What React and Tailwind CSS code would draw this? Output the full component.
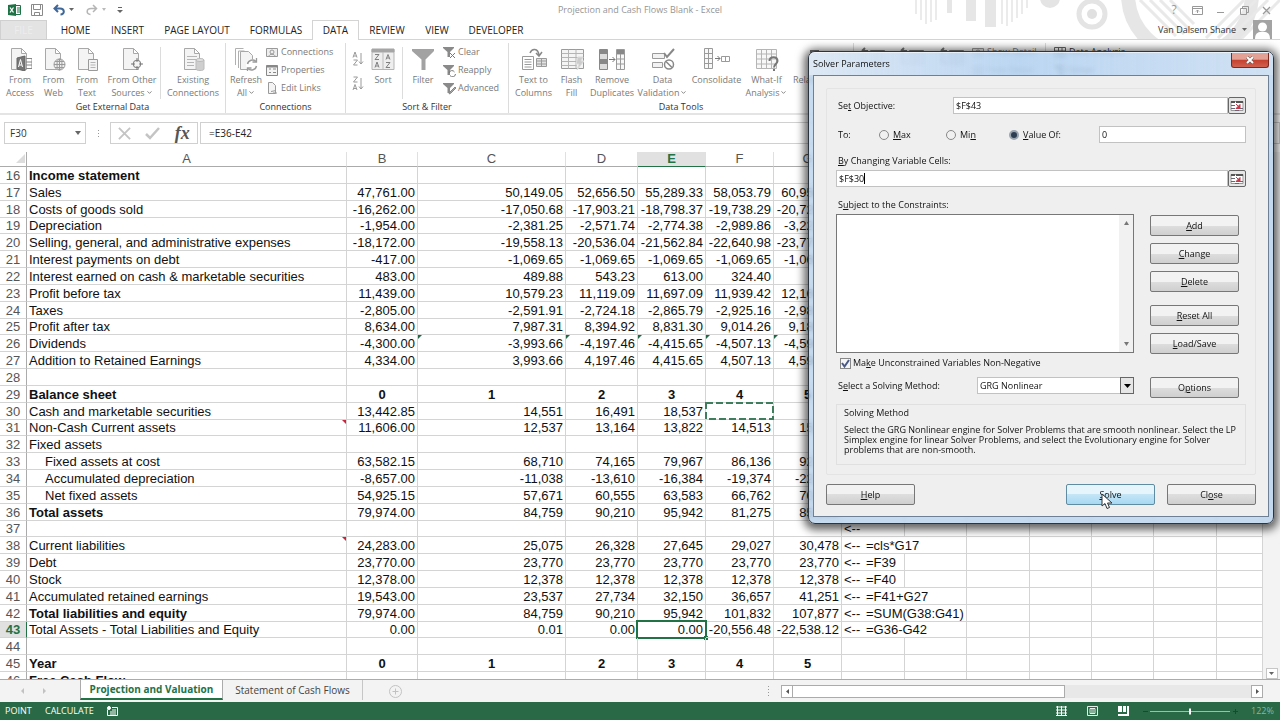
import { ChevronDown } from 'lucide-react';

const tabs = [
    { label: 'HOME', width: 'w-[51px]' },
    { label: 'INSERT', width: 'w-[53px]' },
    { label: 'PAGE LAYOUT', width: 'w-[86px]' },
    { label: 'FORMULAS', width: 'w-[72px]' },
    { label: 'DATA', width: 'w-[47px]', active: true },
    { label: 'REVIEW', width: 'w-[56px]' },
    { label: 'VIEW', width: 'w-[44px]' },
    { label: 'DEVELOPER', width: 'w-[74px]' },
];

const columns = [
    { name: 'A', width: 'w-[320px]' },
    { name: 'B', width: 'w-[71px]' },
    { name: 'C', width: 'w-[148px]' },
    { name: 'D', width: 'w-[72px]' },
    { name: 'E', width: 'w-[68px]' },
    { name: 'F', width: 'w-[68px]' },
    { name: 'G', width: 'w-[68px]' },
    { name: 'H', width: 'w-[63px]' },
    { name: 'I', width: 'w-[62px]' },
    { name: 'J', width: 'w-[63px]' },
    { name: 'K', width: 'w-[62px]' },
    { name: 'L', width: 'w-[62px]' },
    { name: 'M', width: 'w-[63px]' },
    { name: 'N', width: 'w-auto' },
];

const rows = [
    { n: 16, label: 'Income statement', bold: true },
    { n: 17, label: 'Sales', values: ['47,761.00', '50,149.05', '52,656.50', '55,289.33', '58,053.79', '60,956.48'] },
    { n: 18, label: 'Costs of goods sold', values: ['-16,262.00', '-17,050.68', '-17,903.21', '-18,798.37', '-19,738.29', '-20,725.20'] },
    { n: 19, label: 'Depreciation', values: ['-1,954.00', '-2,381.25', '-2,571.74', '-2,774.38', '-2,989.86', '-3,221.43'] },
    { n: 20, label: 'Selling, general, and administrative expenses', values: ['-18,172.00', '-19,558.13', '-20,536.04', '-21,562.84', '-22,640.98', '-23,773.03'] },
    { n: 21, label: 'Interest payments on debt', values: ['-417.00', '-1,069.65', '-1,069.65', '-1,069.65', '-1,069.65', '-1,069.65'] },
    { n: 22, label: 'Interest earned on cash & marketable securities', values: ['483.00', '489.88', '543.23', '613.00', '324.40', '2.44'] },
    { n: 23, label: 'Profit before tax', values: ['11,439.00', '10,579.23', '11,119.09', '11,697.09', '11,939.42', '12,169.61'] },
    { n: 24, label: 'Taxes', values: ['-2,805.00', '-2,591.91', '-2,724.18', '-2,865.79', '-2,925.16', '-2,981.55'] },
    { n: 25, label: 'Profit after tax', values: ['8,634.00', '7,987.31', '8,394.92', '8,831.30', '9,014.26', '9,188.06'] },
    { n: 26, label: 'Dividends', flagged: true, values: ['-4,300.00', '-3,993.66', '-4,197.46', '-4,415.65', '-4,507.13', '-4,594.03'] },
    { n: 27, label: 'Addition to Retained Earnings', values: ['4,334.00', '3,993.66', '4,197.46', '4,415.65', '4,507.13', '4,594.03'] },
    { n: 28 },
    { n: 29, label: 'Balance sheet', bold: true, years: true, values: ['0', '1', '2', '3', '4', '5'] },
    { n: 30, label: 'Cash and marketable securities', values: ['13,442.85', '14,551', '16,491', '18,537', '', ''] },
    { n: 31, label: 'Non-Cash Current assets', note: true, values: ['11,606.00', '12,537', '13,164', '13,822', '14,513', '15,239'] },
    { n: 32, label: 'Fixed assets' },
    { n: 33, label: 'Fixed assets at cost', indent: true, values: ['63,582.15', '68,710', '74,165', '79,967', '86,136', '92,783'] },
    { n: 34, label: 'Accumulated depreciation', indent: true, values: ['-8,657.00', '-11,038', '-13,610', '-16,384', '-19,374', '-22,595'] },
    { n: 35, label: 'Net fixed assets', indent: true, values: ['54,925.15', '57,671', '60,555', '63,583', '66,762', '70,100'] },
    { n: 36, label: 'Total assets', bold: true, values: ['79,974.00', '84,759', '90,210', '95,942', '81,275', '85,339'] },
    { n: 37, formula: '' },
    { n: 38, label: 'Current liabilities', note: true, values: ['24,283.00', '25,075', '26,328', '27,645', '29,027', '30,478'], formula: '=cls*G17' },
    { n: 39, label: 'Debt', values: ['23,770.00', '23,770', '23,770', '23,770', '23,770', '23,770'], formula: '=F39' },
    { n: 40, label: 'Stock', values: ['12,378.00', '12,378', '12,378', '12,378', '12,378', '12,378'], formula: '=F40' },
    { n: 41, label: 'Accumulated retained earnings', values: ['19,543.00', '23,537', '27,734', '32,150', '36,657', '41,251'], formula: '=F41+G27' },
    { n: 42, label: 'Total liabilities and equity', bold: true, values: ['79,974.00', '84,759', '90,210', '95,942', '101,832', '107,877'], formula: '=SUM(G38:G41)' },
    { n: 43, label: 'Total Assets - Total Liabilities and Equity', values: ['0.00', '0.01', '0.00', '0.00', '-20,556.48', '-22,538.12'], formula: '=G36-G42' },
    { n: 44 },
    { n: 45, label: 'Year', bold: true, years: true, values: ['0', '1', '2', '3', '4', '5'] },
    { n: 46, label: 'Free Cash Flow', bold: true },
];

/* ---------- icons ---------- */

function Icon({ children, w = 24, h = 24 }) {
    return (
        <svg width={w} height={h} viewBox={`0 0 ${w} ${h}`} fill="none" stroke="#9a9a9a" aria-hidden="true">
            {children}
        </svg>
    );
}

const Page = () => <path d="M3.500 1.500h10l5 5v16h-15zM13.500 1.500v5h5" fill="#f4f4f4" stroke="#a8a8a8" />;

const AccessIcon = () => (
    <Icon>
        <Page />
        <path d="M9 11l8-2v15l-8-2z" fill="#777" stroke="#666" />
        <path d="M10.500 20l2-7.500 2 7.500M11.200 18h2.700" stroke="#fff" />
        <path d="M18 11.500h6v10h-6M18 15h6M18 18h6" stroke="#888" />
    </Icon>
);
const WebIcon = () => (
    <Icon>
        <Page />
        <circle cx="17.500" cy="17.500" r="5.500" fill="#eee" />
        <path d="M12 17.500h11M17.500 12v11M13 14.500h9M13 20.500h9" />
        <ellipse cx="17.500" cy="17.500" rx="2.500" ry="5.500" />
    </Icon>
);
const TextIcon = () => (
    <Icon>
        <Page />
        <path d="M13.500 12.500h9v11h-9z" fill="#f4f4f4" />
        <path d="M15.500 15.500h5M15.500 18h5M15.500 20.500h5" stroke="#b5b5b5" />
    </Icon>
);
const OtherIcon = () => (
    <Icon>
        <Page />
        <circle cx="17" cy="17" r="3.800" fill="#f4f4f4" stroke="#777" />
        <path d="M17 11v4M17 19v4M11 17h4M19 17h4" stroke="#777" />
    </Icon>
);
const ExistingIcon = () => (
    <Icon>
        <Page />
        <path d="M6 9.500h10M6 12.500h10M6 15.500h7M6 18.500h7" stroke="#b5b5b5" />
        <path d="M15 13v9c0 2 8 2 8 0v-9z" fill="#cfcfcf" stroke="#bbb" />
        <ellipse cx="19" cy="13" rx="4" ry="1.500" fill="#e2e2e2" stroke="#bbb" />
    </Icon>
);
const RefreshIcon = () => (
    <Icon>
        <path d="M1.500 18V1.500h8M4.500 21V4h6" stroke="#b0b0b0" />
        <path d="M6.500 4.500h8l4 4v14h-12z" fill="#f4f4f4" stroke="#a8a8a8" />
        <circle cx="18" cy="18" r="6" fill="#fff" stroke="none" />
        <path d="M13.500 17a5 5 0 0 1 8.500-2.500M22.500 19a5 5 0 0 1-8.500 2.500" strokeWidth="1.500" />
        <path d="M22.500 11v4h-4M13.500 25v-4h4" strokeWidth="1.300" />
    </Icon>
);
const SortIcon = () => (
    <Icon>
        <path d="M1 2.500h22v20H1z" fill="#eee" stroke="#b5b5b5" />
        <path d="M1 2h22v3H1z" fill="#a5a5a5" stroke="#a5a5a5" />
        <path d="M12 5v17" stroke="#bbb" />
        <path d="M4 7.500h4l-4 5h4M4 20.500l2-5.500 2 5.500M4.700 19h2.600M15 12.500l2-5 2 5M15.700 11h2.600M15 15.500h4l-4 5h4" stroke="#808080" />
    </Icon>
);
const SortArrow = ({ down }) => (
    <Icon w={12} h={15}>
        {down
            ? <path d="M1.500 1h4l-4 5h4M1 14l2-5.500L5 14M1.700 12.500h2.600" />
            : <path d="M1 6.500L3 1l2 5.500M1.700 5h2.600M1.500 9h4l-4 5h4" />}
        <path d="M9 2v11M7 10.500l2 2.500 2-2.500" />
    </Icon>
);
const FilterIcon = () => (
    <Icon><path d="M1 2h22v2l-8.500 8.500V23h-4V12.500L1 4z" fill="#a2a2a2" stroke="none" /></Icon>
);
const ColumnsIcon = () => (
    <Icon w={26}>
        <path d="M9 6c2-5 8-5 9 2M15 6l3 3 3-4" stroke="#888" strokeWidth="1.500" />
        <path d="M1.500 9.500h11v13h-11zM3.500 12.500h7M3.500 15h7M3.500 17.500h7M3.500 20h7" />
        <path d="M15.500 11.500h10v8h-10zM20.500 11.500v8M15.500 14h10M15.500 17h10" fill="#e2e2e2" />
    </Icon>
);
const FlashIcon = () => (
    <Icon>
        <path d="M1.500 2.500h22v19h-22z" fill="#f4f4f4" />
        <path d="M1.500 6.500h22M1.500 10.500h22M1.500 14.500h15M1.500 18.500h15M8.500 2.500v19M16 2.500v19" stroke="#b5b5b5" />
        <path d="M18 10l5 0-2 4h3l-7 9 2-6h-3z" fill="#ccc" stroke="#ddd" />
    </Icon>
);
const DuplicatesIcon = () => (
    <Icon w={26}>
        <path d="M.5 2.500h8v20h-8z" fill="#ddd" stroke="#888" />
        <path d="M1 3h7v4H1zM1 12h7v5H1z" fill="#888" stroke="none" />
        <path d="M10 12.500h6M13.500 10l2.500 2.500-2.500 2.500" stroke="#777" />
        <path d="M17.500 2.500h8v20h-8zM17.500 7h8M17.500 12h8M17.500 17h8M21.500 7v15" fill="#f8f8f8" />
        <path d="M18 3h7v4h-7z" fill="#888" stroke="none" />
    </Icon>
);
const ValidationIcon = () => (
    <Icon>
        <path d="M1.500 6.500h12v5h-12zM1.500 15.500h10v5h-10z" fill="#f2f2f2" />
        <path d="M13 6l3 4 7-8" stroke="#888" strokeWidth="2" />
        <circle cx="18" cy="17.500" r="4.500" stroke="#888" strokeWidth="1.500" />
        <path d="M15 14.500l6 6" stroke="#888" strokeWidth="1.500" />
    </Icon>
);
const ConsolidateIcon = () => (
    <Icon w={26}>
        <path d="M.5 1.500h8v20h-8zM.5 6.500h8M.5 11.500h8M.5 16.500h8M4.500 1.500v20" fill="#f8f8f8" />
        <path d="M11 11.500h5M13.500 9l2.500 2.500-2.500 2.500" stroke="#777" />
        <path d="M17.500 9.500h8v5h-8zM21.500 9.500v5" />
    </Icon>
);
const WhatIfIcon = () => (
    <Icon>
        <path d="M1.500 2.500h20v19h-20zM1.500 7h20M1.500 12h20M1.500 17h20M6.500 2.500v19M11.500 2.500v19M16.500 2.500v19" fill="#f8f8f8" stroke="#b5b5b5" />
        <path d="M14.500 14c0-5 8-5 8 0 0 3-3.500 3-3.500 6.500M19 22v2" stroke="#777" strokeWidth="2" />
    </Icon>
);
const RelationIcon = () => (
    <Icon>
        <path d="M1 3h9v8H1zM14 13h9v8h-9z" fill="#777" stroke="none" />
        <path d="M10 7h8v6M5 11v7h9" />
    </Icon>
);
const OutlineIcon = () => (
    <Icon>
        <path d="M9.500 3.500h14v14h-14zM9.500 8h14M9.500 13h14M16.500 3.500v14" fill="#eee" stroke="#888" />
        <path d="M7 4H2v12h5M1 4l3-3" stroke="#777" strokeWidth="2" />
    </Icon>
);

const Funnel = ({ children }) => (
    <Icon w={13} h={13}>
        <path d="M0 1h11v1L7 6v5H4.500V6L0 2z" fill="#8a8a8a" stroke="none" />
        {children}
    </Icon>
);
const ClearIcon = () => <Funnel><path d="M7 7l5 5M12 7l-5 5" stroke="#777" /></Funnel>;
const ReapplyIcon = () => <Funnel><path d="M6 9a3 3 0 0 1 5.500-1M12.500 10A3 3 0 0 1 7 11.500" stroke="#777" /></Funnel>;
const AdvancedIcon = () => <Funnel><path d="M6 12l1-2 5-5 1 1-5 5z" fill="#aaa" stroke="#888" /></Funnel>;
const ConnIcon = () => (
    <Icon w={13} h={13}>
        <path d="M.5 2.500h11v8H.5z" fill="#eee" />
        <circle cx="6" cy="6" r="2" />
        <path d="M3 10.500c0-3 6-3 6 0" />
    </Icon>
);
const PropsIcon = () => (
    <Icon w={13} h={13}>
        <path d="M.5 1.500h11v10H.5zM3 5h2M3 8.500h2M7 5h3M7 8.500h3" fill="#f4f4f4" stroke="#888" />
        <path d="M.5 2.500h11" stroke="#888" strokeWidth="2" />
    </Icon>
);
const LinksIcon = () => (
    <Icon w={13} h={13}>
        <path d="M2.500 11.500V.5h4l3 3v8zM5 9.500l5-1M7 11l4 0" fill="#f4f4f4" />
    </Icon>
);
const GridIcon = () => (
    <Icon w={13} h={13}>
        <path d="M.5 1.500h11v10H.5zM.5 5h11M.5 8h11M4.500 1.500v10M8 1.500v10" stroke="#666" />
    </Icon>
);

/* ---------- ribbon ---------- */

function BigButton({ icon: IconCmp, lines, width, menu }) {
    return (
        <button type="button" className={`flex shrink-0 flex-col items-center pt-1 text-[9px] leading-[13px] whitespace-nowrap text-[#7a7a7a] ${width}`}>
            <span className="mb-[2px] flex h-6"><IconCmp /></span>
            <span>{lines[0]}</span>
            <span className="flex items-center gap-px">
                {lines[1]}
                {menu && <ChevronDown className="h-[7px] w-[7px]" strokeWidth={3} />}
            </span>
        </button>
    );
}

function SmallButton({ icon: IconCmp, label, dark }) {
    return (
        <button type="button" className={`flex h-[18px] items-center gap-[2px] text-[9px] whitespace-nowrap ${dark ? 'text-[#333]' : 'text-[#7a7a7a]'}`}>
            <IconCmp />
            {label}
        </button>
    );
}

function Group({ title, width, children }) {
    return (
        <section className={`flex shrink-0 flex-col border-r border-[#dcdcdc] ${width}`}>
            <div className="flex h-[59px]">{children}</div>
            <h2 className="text-center text-[9px] leading-3 text-[#333]">{title}</h2>
        </section>
    );
}

const Divider = () => <div className="mt-1 h-[52px] w-px shrink-0 bg-[#dcdcdc]" />;

function TitleBar() {
    return (
        <div className="flex h-5 items-center">
            <div className="flex flex-1 items-center gap-2.5 pl-2">
                <svg width="13" height="12" viewBox="0 0 13 12" aria-hidden="true">
                    <path d="M7 1.500h5.500v9H7" fill="#fff" stroke="#1f7246" />
                    <path d="M9 4h3M9 6h3M9 8h3" stroke="#1f7246" />
                    <path d="M0 1l8-1v12l-8-1z" fill="#1f7246" />
                    <path d="M2 3.500l3.500 5M5.500 3.500L2 8.500" stroke="#fff" strokeWidth="1.300" />
                </svg>
                <svg width="12" height="12" viewBox="0 0 12 12" fill="none" stroke="#8a8a8a" aria-hidden="true">
                    <path d="M.5.5h11v11H.5zM2.500.5v5h7v-5M3.500 11.500v-3h5v3" />
                </svg>
                <svg width="22" height="12" viewBox="0 0 22 12" fill="none" aria-hidden="true">
                    <path d="M5 1L1.500 4.500 5 8M2 4.500h5c5 0 5 6 .5 6" stroke="#3f6797" strokeWidth="2" />
                    <path d="M16 4h5l-2.500 3z" fill="#666" />
                </svg>
                <svg width="22" height="12" viewBox="0 0 22 12" fill="none" aria-hidden="true">
                    <path d="M8 1l3.500 3.500L8 8M11 4.500H6c-5 0-5 6-.5 6" stroke="#b5b5b5" strokeWidth="1.500" />
                    <path d="M17 4h4l-2 3z" fill="#bbb" />
                </svg>
                <svg width="6" height="8" viewBox="0 0 6 8" aria-hidden="true">
                    <path d="M1 1.500h4" stroke="#666" />
                    <path d="M0 4h6L3 7z" fill="#666" />
                </svg>
            </div>
            <h1 className="text-[9px] text-[#959595]">Projection and Cash Flows Blank - Excel</h1>
            <div className="relative flex flex-1 items-center justify-end gap-3 pr-2 text-[#999]">
                <button type="button" className="w-3 text-xs leading-3" aria-label="Help">?</button>
                <button type="button" aria-label="Ribbon display options">
                    <svg width="11" height="9" viewBox="0 0 11 9" fill="none" stroke="currentColor"><path d="M.5.5h10v8H.5zM.5 2.500h10M5.500 7V4M4 5.500L5.500 4 7 5.500" /></svg>
                </button>
                <button type="button" aria-label="Minimize">
                    <svg width="11" height="9" viewBox="0 0 11 9" fill="none" stroke="currentColor"><path d="M2 6.500h7" /></svg>
                </button>
                <button type="button" aria-label="Restore">
                    <svg width="11" height="9" viewBox="0 0 11 9" fill="none" stroke="currentColor"><path d="M2.500 2.500h6v6h-6zM4.500 2.500v-2h6v6h-2" /></svg>
                </button>
                <button type="button" aria-label="Close window">
                    <svg width="11" height="9" viewBox="0 0 11 9" fill="none" stroke="currentColor" strokeWidth="1.300"><path d="M2 1l7 7M9 1L2 8" /></svg>
                </button>
            </div>
        </div>
    );
}

// Office background pattern in the top right corner
function Pattern() {
    return (
        <svg className="pointer-events-none absolute top-0 right-0" width="370" height="39" viewBox="0 0 370 39" fill="none" aria-hidden="true">
            <g stroke="#ebebeb" strokeWidth="2">
                <path d="M6 0v14M11 0v20M16 0v24M21 0v22M26 0v20" />
                <path d="M92 0v24M97 0v26M102 0v22M107 0v18M112 0v14M117 0v8" />
            </g>
            <path d="M37 0h5v13h-5zM56 0h10v21H56zM75 0h11v27H75z" fill="#e6e6e6" />
            <circle cx="140" cy="-2" r="10" fill="#e4e4e4" />
            <circle cx="182" cy="14" r="13" stroke="#e4e4e4" strokeWidth="5" />
            <circle cx="182" cy="14" r="5" fill="#e0e0e0" />
            <circle cx="280" cy="-6" r="62" stroke="#e6e6e6" strokeWidth="14" />
            <g stroke="#e9e9e9" strokeWidth="3">
                <path d="M230 0l36 36M240 0l34 34M250 0l30 30M260 0l24 24" />
                <path d="M296 38L334 0M308 38L346 0M320 38L358 0M332 38L370 0" />
            </g>
        </svg>
    );
}

function TabBar() {
    return (
        <nav className="flex h-5 border-b border-[#d4d4d4]">
            <button type="button" className="h-5 w-[47px] border border-[#d0d0d0] bg-[#e3e3e3] text-[10px] leading-4 text-[#ededed]">FILE</button>
            <div className="ml-[3px] flex flex-1">
                {tabs.map(tab => (
                    <button
                        key={tab.label}
                        type="button"
                        className={`relative h-5 text-center text-[10px] whitespace-nowrap text-[#222] ${tab.width} ${tab.active ? 'border border-b-0 border-[#d4d4d4] bg-white' : ''}`}
                    >
                        {tab.label}
                    </button>
                ))}
            </div>
            <div className="relative flex items-center pr-2 text-[9px] text-[#333]">
                Van Dalsem Shane
                <svg className="mx-[6px]" width="5" height="3" viewBox="0 0 5 3" aria-hidden="true"><path d="M0 0h5L2.500 3z" fill="#666" /></svg>
                <svg width="19" height="19" viewBox="0 0 19 19" aria-hidden="true">
                    <path d="M0 0h19v19H0z" fill="#a3a3a3" />
                    <circle cx="9.500" cy="7" r="4.500" fill="#fff" />
                    <path d="M2 19c0-7 4-7 7.500-7s7.500 0 7.500 7z" fill="#fff" />
                </svg>
            </div>
        </nav>
    );
}

function Ribbon() {
    return (
        <div className="flex h-[75px] overflow-hidden border-b-2 border-[#e4e4e4] pt-[3px]">
            <Group title="Get External Data" width="w-[226px]">
                <div className="w-[3px] shrink-0" />
                <BigButton icon={AccessIcon} lines={['From', 'Access']} width="w-[34px]" />
                <BigButton icon={WebIcon} lines={['From', 'Web']} width="w-[33px]" />
                <BigButton icon={TextIcon} lines={['From', 'Text']} width="w-[34px]" />
                <BigButton icon={OtherIcon} lines={['From Other', 'Sources']} width="w-[56px]" menu />
                <Divider />
                <BigButton icon={ExistingIcon} lines={['Existing', 'Connections']} width="w-[64px]" />
            </Group>
            <Group title="Connections" width="w-[120px]">
                <BigButton icon={RefreshIcon} lines={['Refresh', 'All']} width="w-[40px]" menu />
                <div className="flex flex-col">
                    <SmallButton icon={ConnIcon} label="Connections" />
                    <SmallButton icon={PropsIcon} label="Properties" />
                    <SmallButton icon={LinksIcon} label="Edit Links" />
                </div>
            </Group>
            <Group title="Sort & Filter" width="w-[163px]">
                <div className="flex w-[18px] flex-col items-end gap-2.5 pt-2">
                    <SortArrow />
                    <SortArrow down />
                </div>
                <BigButton icon={SortIcon} lines={['Sort', '']} width="w-[38px]" />
                <Divider />
                <BigButton icon={FilterIcon} lines={['Filter', '']} width="w-[40px]" />
                <div className="flex flex-col">
                    <SmallButton icon={ClearIcon} label="Clear" />
                    <SmallButton icon={ReapplyIcon} label="Reapply" />
                    <SmallButton icon={AdvancedIcon} label="Advanced" />
                </div>
            </Group>
            <Group title="Data Tools" width="w-[345px]">
                <div className="w-1 shrink-0" />
                <BigButton icon={ColumnsIcon} lines={['Text to', 'Columns']} width="w-[41px]" />
                <BigButton icon={FlashIcon} lines={['Flash', 'Fill']} width="w-[35px]" />
                <BigButton icon={DuplicatesIcon} lines={['Remove', 'Duplicates']} width="w-[46px]" />
                <BigButton icon={ValidationIcon} lines={['Data', 'Validation']} width="w-[55px]" menu />
                <BigButton icon={ConsolidateIcon} lines={['Consolidate', '']} width="w-[53px]" />
                <BigButton icon={WhatIfIcon} lines={['What-If', 'Analysis']} width="w-[47px]" menu />
                <BigButton icon={RelationIcon} lines={['Relationships', '']} width="w-[62px]" />
            </Group>
            <Group title="Outline" width="w-[192px]">
                <BigButton icon={OutlineIcon} lines={['Group', '']} width="w-[38px]" />
                <BigButton icon={OutlineIcon} lines={['Ungroup', '']} width="w-[40px]" />
                <BigButton icon={OutlineIcon} lines={['Subtotal', '']} width="w-[40px]" />
                <div className="flex flex-col">
                    <SmallButton icon={ConnIcon} label="Show Detail" />
                    <SmallButton icon={ConnIcon} label="Hide Detail" />
                </div>
            </Group>
            <div className="flex flex-col pl-2">
                <SmallButton icon={GridIcon} label="Data Analysis" dark />
                <SmallButton icon={AdvancedIcon} label="Solver" dark />
            </div>
        </div>
    );
}

function FormulaBar() {
    return (
        <div className="flex h-[37px] items-start pt-[7px] pl-1">
            <div className="flex h-[22px] w-[82px] items-center border border-[#d0d0d0] pr-1">
                <input aria-label="Name box" defaultValue="F30" className="w-full min-w-0 flex-1 pl-[5px] text-[10px] text-[#333] outline-none" />
                <svg width="6" height="4" viewBox="0 0 6 4" aria-hidden="true"><path d="M0 0h6L3 4z" fill="#666" /></svg>
            </div>
            <div className="flex h-[22px] w-6 flex-col items-center justify-center gap-[2px]">
                <span className="h-px w-px bg-[#999]" />
                <span className="h-px w-px bg-[#999]" />
                <span className="h-px w-px bg-[#999]" />
            </div>
            <div className="flex h-[22px] w-[88px] items-center justify-around border border-[#d0d0d0]">
                <button type="button" aria-label="Cancel">
                    <svg width="13" height="13" viewBox="0 0 14 14" fill="none" stroke="#c4c4c4" strokeWidth="2"><path d="M1 1l12 12M13 1L1 13" /></svg>
                </button>
                <button type="button" aria-label="Enter">
                    <svg width="15" height="13" viewBox="0 0 15 13" fill="none" stroke="#c4c4c4" strokeWidth="2.500"><path d="M1 7l4 4 9-10" /></svg>
                </button>
                <button type="button" className="font-['Liberation_Serif',serif] text-[18px] leading-4 font-bold text-[#555] italic">fx</button>
            </div>
            <input
                aria-label="Formula"
                defaultValue="=E36-E42"
                className="ml-[2px] h-[22px] min-w-0 flex-1 border border-[#d0d0d0] pl-2 text-[10px] text-[#222] outline-none"
            />
        </div>
    );
}

/* ---------- sheet ---------- */

function SheetRow({ row }) {
    const values = row.values || ['', '', '', '', '', ''];
    const hasFormula = row.formula !== undefined;
    const wide = hasFormula && row.formula.length > 4;
    const trailing = wide ? 5 : 6;
    const current = row.n === 43;

    return (
        <tr className={row.n % 6 === 1 ? 'h-4' : 'h-[17px]'}>
            <th
                scope="row"
                className={`border-r border-b border-[#d4d4d4] text-center ${current ? 'border-r-[#217346] bg-[#e1e1e1] font-bold text-[#217346]' : 'border-r-[#ababab] font-normal text-[#555]'}`}
            >
                {row.n}
            </th>
            <td className={`relative border-r border-b border-[#d4d4d4] whitespace-nowrap ${row.bold ? 'font-bold' : ''} ${row.indent ? 'pl-[18px]' : 'pl-[2px]'}`}>
                {row.label}
                {row.note && (
                    <svg className="absolute top-0 right-0" width="4" height="4" viewBox="0 0 4 4"><path d="M0 0h4v4z" fill="#d0213a" /></svg>
                )}
            </td>
            {values.map((value, i) => (
                <td
                    key={i}
                    className={`relative border-r border-b border-[#d4d4d4] whitespace-nowrap ${row.years ? 'text-center font-bold' : 'pr-[2px] text-right'}`}
                >
                    {value}
                    {row.flagged && i > 0 && (
                        <svg className="absolute top-0 left-0" width="4" height="4" viewBox="0 0 4 4"><path d="M0 0h4L0 4z" fill="#1f6a45" /></svg>
                    )}
                    {current && i === 3 && (
                        <span className="absolute -inset-[2px] border-2 border-[#217346]">
                            <span className="absolute -right-[3px] -bottom-[3px] h-1 w-1 bg-[#217346]" />
                        </span>
                    )}
                    {row.n === 30 && i === 4 && (
                        <svg className="absolute -top-px -left-px h-[18px] w-[69px]" viewBox="0 0 69 18" fill="none">
                            <path d="M1 1h67v16H1z" stroke="#3f7d5c" strokeWidth="2" strokeDasharray="7 3" />
                        </svg>
                    )}
                </td>
            ))}
            <td colSpan={wide ? 2 : 1} className="border-r border-b border-[#d4d4d4] pl-[2px] whitespace-nowrap">
                {hasFormula && <span className="inline-block w-[22px]">&lt;--</span>}
                {row.formula}
            </td>
            {Array.from({ length: trailing }, (_, i) => (
                <td key={i} className="border-r border-b border-[#d4d4d4]" />
            ))}
        </tr>
    );
}

function Sheet() {
    return (
        <div className="flex min-h-0 flex-1 overflow-hidden bg-white font-['Liberation_Sans',Arial,sans-serif]">
            <div className="min-w-0 flex-1 overflow-hidden">
                <table className="w-full table-fixed border-separate border-spacing-0 text-[13px] leading-[15px] text-[#111]">
                    <colgroup>
                        <col className="w-[27px]" />
                        {columns.map(col => <col key={col.name} className={col.width} />)}
                    </colgroup>
                    <thead>
                        <tr className="h-[15px] leading-[14px]">
                            <th className="border-r border-b border-[#ababab] p-0">
                                <svg className="ml-auto" width="10" height="10" viewBox="0 0 10 10"><path d="M9 0v9H0z" fill="#dcdcdc" /></svg>
                            </th>
                            {columns.map(col => (
                                <th
                                    key={col.name}
                                    scope="col"
                                    className={`border-r border-b border-r-[#e0e0e0] ${col.name === 'E' ? 'border-b-[#217346] bg-[#e1e1e1] font-bold text-[#217346]' : 'border-b-[#ababab] font-normal text-[#555]'}`}
                                >
                                    {col.name}
                                </th>
                            ))}
                        </tr>
                    </thead>
                    <tbody>
                        {rows.map(row => <SheetRow key={row.n} row={row} />)}
                    </tbody>
                </table>
            </div>
            <div className="flex w-[17px] shrink-0 flex-col items-center justify-end bg-[#f3f3f3]">
                <button type="button" aria-label="Scroll down" className="flex h-[11px] w-3 items-center justify-center border border-[#c6c6c6] bg-white">
                    <svg width="5" height="3" viewBox="0 0 5 3"><path d="M0 0h5L2.500 3z" fill="#666" /></svg>
                </button>
            </div>
        </div>
    );
}

function SheetTabs() {
    return (
        <div className="flex h-[23px] shrink-0 border-t border-[#ababab] bg-[#f3f3f3]">
            <div className="flex w-20 items-center justify-center gap-[18px] pr-3">
                <svg width="4" height="6" viewBox="0 0 4 6"><path d="M3 0v6L0 3z" fill="#c2c2c2" /></svg>
                <svg width="4" height="6" viewBox="0 0 4 6"><path d="M0 0v6l3-3z" fill="#c2c2c2" /></svg>
            </div>
            <button type="button" className="h-5 w-[143px] border-x border-b-2 border-x-[#ababab] border-b-[#217346] bg-white text-[10px] font-bold whitespace-nowrap text-[#217346]">
                Projection and Valuation
            </button>
            <button type="button" className="h-5 w-[140px] border-r border-[#c6c6c6] text-[10px] whitespace-nowrap text-[#444]">
                Statement of Cash Flows
            </button>
            <button type="button" aria-label="New sheet" className="ml-[26px] self-center">
                <svg width="13" height="13" viewBox="0 0 13 13" fill="none" stroke="#c2c2c2"><circle cx="6.500" cy="6.500" r="6" /><path d="M6.500 3.500v6M3.500 6.500h6" /></svg>
            </button>
            <div className="flex flex-1 items-center justify-end pr-[17px]">
                <div className="mr-3 flex flex-col gap-[2px]">
                    <span className="h-px w-px bg-[#999]" />
                    <span className="h-px w-px bg-[#999]" />
                    <span className="h-px w-px bg-[#999]" />
                    <span className="h-px w-px bg-[#999]" />
                </div>
                <div className="flex h-[13px] w-[482px] bg-[#e8e8e8]">
                    <button type="button" aria-label="Scroll left" className="flex w-3 items-center justify-center border border-[#ababab] bg-white">
                        <svg width="3" height="5" viewBox="0 0 3 5"><path d="M3 0v5L0 2.500z" fill="#555" /></svg>
                    </button>
                    <div className="w-[272px] border border-l-0 border-[#ababab] bg-white" />
                    <button type="button" aria-label="Scroll right" className="ml-auto flex w-3 items-center justify-center border border-[#ababab] bg-white">
                        <svg width="3" height="5" viewBox="0 0 3 5"><path d="M0 0v5l3-2.500z" fill="#555" /></svg>
                    </button>
                </div>
            </div>
        </div>
    );
}

function StatusBar() {
    return (
        <footer className="flex h-[18px] shrink-0 items-center bg-[#296945] px-[5px] text-[9px] text-white">
            <span className="w-10">POINT</span>
            <span className="w-[62px]">CALCULATE</span>
            <svg width="11" height="10" viewBox="0 0 11 10" fill="none" stroke="#fff" aria-hidden="true">
                <path d="M.5 3.500v6h10v-8H5M3 6h6M3 8h6M5 4h4" />
                <circle cx="2" cy="2" r="1.500" fill="#fff" />
            </svg>
            <div className="ml-auto flex items-center">
                <svg width="11" height="10" viewBox="0 0 11 10" stroke="#fff" aria-hidden="true"><path d="M0 1h11M0 4h11M0 7h11M1.500 0v10M5.500 0v10M9.500 0v10M0 9.500h11" /></svg>
                <svg className="ml-5" width="11" height="10" viewBox="0 0 11 10" fill="none" stroke="#e5efe9" aria-hidden="true"><path d="M.5.5h10v9H.5zM3 2.500h5v5H3zM4 4h3M4 6h3" /></svg>
                <svg className="ml-5" width="11" height="10" viewBox="0 0 11 10" aria-hidden="true"><path d="M0 0h4v6H0zM5 0h3v6H5zM9 0h2v10H0V8h9z" fill="#fff" /></svg>
                <svg className="ml-3" width="98" height="9" viewBox="0 0 98 9" fill="none" aria-hidden="true">
                    <path d="M2 4.500h5M92 4.500h5M94.500 2v5" stroke="#174a2e" />
                    <path d="M9 4.500h80" stroke="#9cbfab" />
                    <path d="M49 1.500v6" stroke="#fff" strokeWidth="2" />
                </svg>
                <span className="ml-3 w-6 text-[#8fb39e]">122%</span>
            </div>
        </footer>
    );
}

/* ---------- solver dialog ---------- */

function DialogButton({ children, primary }) {
    return (
        <button
            type="button"
            className={`relative h-[21px] w-[89px] rounded-[2px] border text-[9px] leading-4 font-medium text-[#111] ${primary
                ? 'border-[#5f8ba3] bg-linear-to-b from-[#e6f4fc] from-50% via-[#c4e5f6] via-50% to-[#a6d9f2]'
                : 'border-[#777] bg-linear-to-b from-[#f2f2f2] from-50% via-[#dedede] via-50% to-[#cfcfcf]'
            }`}
        >
            {children}
        </button>
    );
}

function RefButton() {
    return (
        <button type="button" aria-label="Select range" className="flex h-[17px] w-[18px] items-center justify-center rounded-[2px] border border-[#666] bg-[#e6e6e6]">
            <svg width="14" height="12" viewBox="0 0 14 12" fill="none" aria-hidden="true">
                <path d="M1 1.500h12v9H1z" fill="#fff" stroke="#999" />
                <path d="M1 2h4M6 2h7" stroke="#555" strokeWidth="2" />
                <path d="M1 5.500h4M1 8.500h4M10 8.500h3M5 10.500h4" stroke="#667" />
                <path d="M6 4l3 3M10 4.500v4H6z" stroke="#c8384a" fill="#c8384a" />
            </svg>
        </button>
    );
}

function Radio({ id, checked, children, width }) {
    return (
        <div className={`flex items-center ${width}`}>
            <input
                id={id}
                type="radio"
                name="target"
                defaultChecked={checked}
                className="mr-1 h-[10px] w-[10px] appearance-none rounded-full border border-[#888] bg-[#f0f0f0] checked:border-[2px] checked:border-[#9aa5b0] checked:bg-[#2d3d52]"
            />
            <label htmlFor={id}>{children}</label>
        </div>
    );
}

const field = 'h-[17px] min-w-0 border border-[#c2c2c2] bg-white px-[2px] text-[9px] text-[#111] outline-none';

function SolverDialog() {
    return (
        <div
            role="dialog"
            aria-labelledby="solver-title"
            className="absolute top-[51px] right-[6px] w-[466px] rounded-[7px] border border-[#2b3540] bg-[#b6d0ec]/75 px-1 pb-[6px] shadow-[0_2px_8px_4px_rgba(0,0,0,0.6)] backdrop-blur-[2px]"
        >
            <div className="-mx-1 flex h-[23px] justify-between rounded-t-[6px] border-t border-white/60 bg-linear-to-r from-[#dde8f4] via-[#a9cdf3]/40 via-45% to-[#d3e3f4]/70 pl-1">
                <h2 id="solver-title" className="text-[9px] leading-[22px] text-[#111]">Solver Parameters</h2>
                <button
                    type="button"
                    aria-label="Close dialog"
                    className="mr-1 flex h-[15px] w-[38px] items-center justify-center rounded-b-[3px] border border-t-0 border-[#7b2a22] bg-linear-to-b from-[#e3a095] from-45% via-[#c5402f] via-50% to-[#d0604e]"
                >
                    <svg width="10" height="8" viewBox="0 0 10 8" fill="none"><path d="M2 1l6 6M8 1L2 7" stroke="#555" strokeWidth="3" /><path d="M2 1l6 6M8 1L2 7" stroke="#fff" strokeWidth="2" /></svg>
                </button>
            </div>

            <div className="border border-[#6d8096] bg-[#efefef] px-3 pt-3 pb-[11px] text-[9px] leading-3 font-medium text-[#111]">
                <div className="rounded-[2px] border border-[#e4e4e4] px-[9px] pt-2 pb-[9px]">
                    <div className="flex items-center">
                        <label htmlFor="objective" className="w-[117px] pl-[2px]">Se<u>t</u> Objective:</label>
                        <input id="objective" defaultValue="$F$43" className={`flex-1 ${field}`} />
                        <RefButton />
                    </div>

                    <div className="mt-3 flex items-center">
                        <span className="w-[43px] pl-[2px]">To:</span>
                        <Radio id="to-max" width="w-[67px]"><u>M</u>ax</Radio>
                        <Radio id="to-min" width="w-[63px]">Mi<u>n</u></Radio>
                        <Radio id="to-value" width="w-[90px]" checked><u>V</u>alue Of:</Radio>
                        <input aria-label="Target value" defaultValue="0" className={`flex-1 ${field}`} />
                    </div>

                    <label htmlFor="cells" className="mt-3 block pl-[2px]"><u>B</u>y Changing Variable Cells:</label>
                    <div className="relative mt-[3px] flex">
                        <input id="cells" defaultValue="$F$30" className={`flex-1 ${field}`} />
                        <span className="absolute top-[3px] left-[28px] h-[11px] w-px bg-black" />
                        <RefButton />
                    </div>

                    <div className="mt-3 flex gap-4">
                        <div className="w-[298px]">
                            <label htmlFor="constraints" className="block pl-[2px]">S<u>u</u>bject to the Constraints:</label>
                            <div className="mt-[3px] flex h-[139px] border border-[#777] bg-white">
                                <textarea id="constraints" readOnly className="flex-1 resize-none outline-none" />
                                <div className="flex w-[14px] flex-col items-center justify-between bg-[#f1f1f1] py-[6px]">
                                    <svg width="5" height="4" viewBox="0 0 5 4"><path d="M0 4h5L2.500 0z" fill="#777" /></svg>
                                    <svg width="5" height="4" viewBox="0 0 5 4"><path d="M0 0h5L2.500 4z" fill="#777" /></svg>
                                </div>
                            </div>
                            <div className="mt-1 flex items-center pl-1">
                                <input
                                    id="nonneg"
                                    type="checkbox"
                                    defaultChecked
                                    className="peer h-[11px] w-[11px] appearance-none border border-[#888] bg-[#f6f6f6]"
                                />
                                <svg className="pointer-events-none -ml-[10px] h-[9px] w-[9px]" viewBox="0 0 9 9" fill="none"><path d="M1 4l2.500 3.500L8 1" stroke="#4a5a88" strokeWidth="2" /></svg>
                                <label htmlFor="nonneg" className="pl-[3px]">Ma<u>k</u>e Unconstrained Variables Non-Negative</label>
                            </div>
                            <div className="mt-2 flex items-center">
                                <label htmlFor="method" className="w-[141px] pl-[2px]">S<u>e</u>lect a Solving Method:</label>
                                <div className="relative flex-1">
                                    <select id="method" className={`block w-full appearance-none ${field}`}>
                                        <option>GRG Nonlinear</option>
                                    </select>
                                    <span className="pointer-events-none absolute top-0 right-0 flex h-[17px] w-[14px] items-center justify-center border border-[#666] bg-[#e6e6e6]">
                                        <svg width="7" height="4" viewBox="0 0 7 4"><path d="M0 0h7L3.500 4z" fill="#000" /></svg>
                                    </span>
                                </div>
                            </div>
                        </div>

                        <div className="flex flex-col gap-[7px] pt-4">
                            <DialogButton><u>A</u>dd</DialogButton>
                            <DialogButton><u>C</u>hange</DialogButton>
                            <DialogButton><u>D</u>elete</DialogButton>
                            <div className="mt-[6px] flex flex-col gap-[7px]">
                                <DialogButton><u>R</u>eset All</DialogButton>
                                <DialogButton><u>L</u>oad/Save</DialogButton>
                            </div>
                            <div className="mt-4 flex">
                                <DialogButton>O<u>p</u>tions</DialogButton>
                            </div>
                        </div>
                    </div>

                    <section className="mt-[6px] border border-[#e0e0e0] px-[7px] pt-[2px] pb-[9px] leading-[10px]">
                        <h3 className="mb-[6px] leading-3">Solving Method</h3>
                        <p>
                            Select the GRG Nonlinear engine for Solver Problems that are smooth nonlinear. Select the LP
                            Simplex engine for linear Solver Problems, and select the Evolutionary engine for Solver
                            problems that are non-smooth.
                        </p>
                    </section>
                </div>

                <div className="mt-[9px] flex gap-3">
                    <DialogButton><u>H</u>elp</DialogButton>
                    <div className="ml-auto flex">
                        <DialogButton primary>
                            <u>S</u>olve
                            <svg className="absolute top-[8px] left-[34px]" width="12" height="17" viewBox="0 0 12 17" aria-hidden="true">
                                <path d="M1 1v12l3-2.500L6 15.500l2.500-1-2-4.500h4.500z" fill="#fff" stroke="#333" />
                            </svg>
                        </DialogButton>
                    </div>
                    <DialogButton>Cl<u>o</u>se</DialogButton>
                </div>
            </div>
        </div>
    );
}

export default function App() {
    return (
        <div className="relative flex h-screen flex-col overflow-hidden bg-white font-['Open_Sans','Noto_Sans',sans-serif]">
            <header className="relative shrink-0">
                <Pattern />
                <TitleBar />
                <TabBar />
                <Ribbon />
                <FormulaBar />
            </header>
            <Sheet />
            <SheetTabs />
            <StatusBar />
            <SolverDialog />
        </div>
    );
}
